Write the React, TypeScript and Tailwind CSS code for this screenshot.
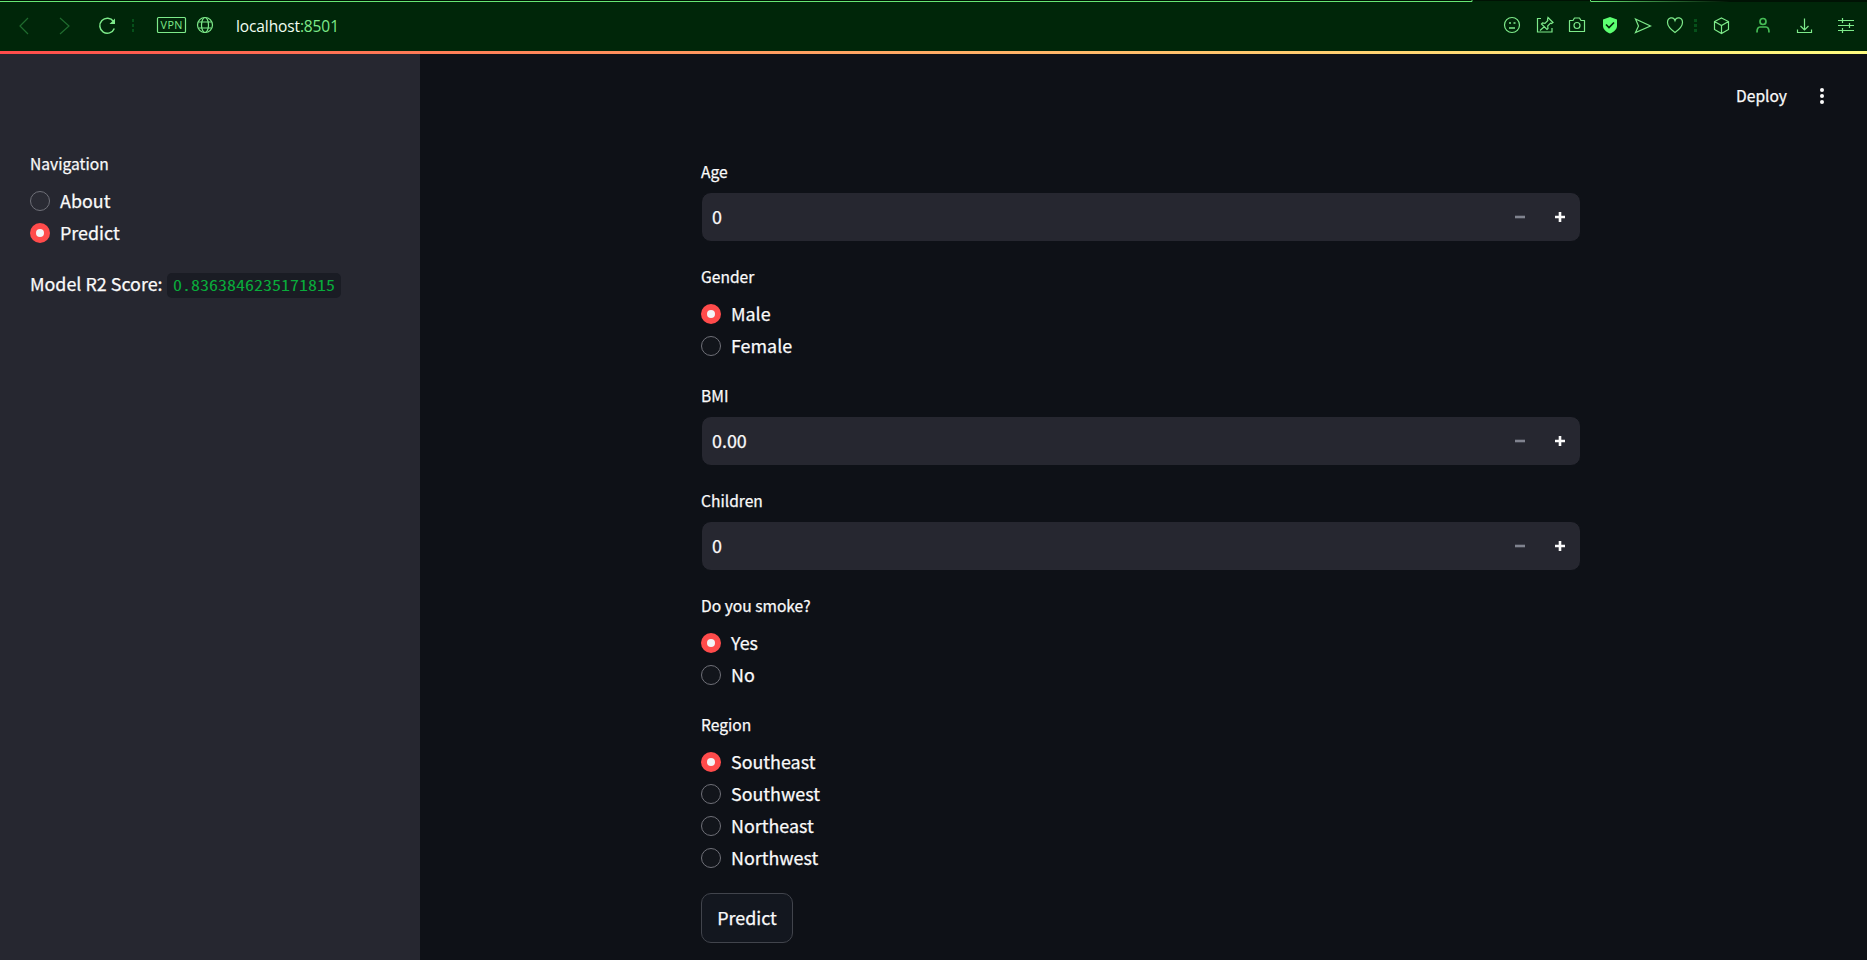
import React from "react";

const SANS = "font-['Noto_Sans_CJK_SC','Noto_Sans',sans-serif]";

function Radio({ label, checked = false }: { label: string; checked?: boolean }) {
  return (
    <div className="flex h-8 items-start gap-[10px] pt-[7px]">
      {checked ? (
        <span className="flex size-5 shrink-0 items-center justify-center rounded-full bg-[#ff4b4b]">
          <span className="size-2 rounded-full bg-[#f4f4f6]" />
        </span>
      ) : (
        <span className="size-5 shrink-0 rounded-full border border-[#6f7078] bg-white/2" />
      )}
      <span className="-mt-px whitespace-nowrap text-[17.9px] leading-5">{label}</span>
    </div>
  );
}

function Label({ children }: { children: React.ReactNode }) {
  return <div className="mb-[5px] h-[30px] whitespace-nowrap text-[15.6px] leading-[28px]">{children}</div>;
}

function RadioGroup({ label, options, value }: { label: string; options: string[]; value: string }) {
  return (
    <div>
      <Label>{label}</Label>
      {options.map((o) => (
        <Radio key={o} label={o} checked={o === value} />
      ))}
    </div>
  );
}

function NumberInput({ label, value }: { label: string; value: string }) {
  return (
    <div>
      <Label>{label}</Label>
      <div className="flex h-[50px] items-center rounded-[10px] border border-[#0e1117] bg-[#262730] pl-[10px]">
        <span className="grow pb-[2px] text-[17.9px] leading-8">{value}</span>
        <svg width="40" height="48" viewBox="0 0 40 48">
          <path d="M15 22.700h10v2.600h-10z" fill="#80838f" />
        </svg>
        <svg width="40" height="48" viewBox="0 0 40 48">
          <path d="M15 22.700h10v2.600h-10zM18.700 19h2.600v10h-2.600z" fill="#fafafa" />
        </svg>
      </div>
    </div>
  );
}

function Toolbar() {
  return (
    <div className="h-[51px] bg-[#002609]">
      <svg width="1867" height="51" viewBox="0 0 1867 51" fill="none" stroke="#7dea8a" strokeWidth="1.2">
        <defs>
          <linearGradient id="tabfade" x1="1590" x2="1730" y1="0" y2="0" gradientUnits="userSpaceOnUse">
            <stop offset="0" stopColor="#66e874" />
            <stop offset="1" stopColor="#001204" />
          </linearGradient>
        </defs>
        <path d="M0 .5H1867" stroke="#001204" strokeWidth="1" />
        <path d="M0 1.500H1472v-1.500M1590.500 0v1.500" stroke="#66e874" strokeWidth="1" />
        <path d="M1591 1h276v1h-276z" fill="url(#tabfade)" stroke="none" />
        <path d="M28 18l-8 8 8 8M60 18l9 8-9 8" stroke="#1f6b2e" />
        <path d="M113.500 21.500A7.500 7.500 0 1 0 114.300 28.500" strokeWidth="1.500" />
        <path d="M115 18.500v5.500h-5.500z" fill="#7dea8a" stroke="none" />
        <path d="M132 19h2v3h-2zM132 24h2v3h-2zM132 29h2v3h-2z" fill="#06501a" stroke="none" />
        <rect x="157.500" y="17.500" width="28" height="15" rx="1" />
        <text x="171.500" y="29.200" fill="#7dea8a" stroke="none" fontSize="10.800" textAnchor="middle" textLength="22" className="font-['Open_Sans',sans-serif]">VPN</text>
        <g>
          <circle cx="205" cy="25" r="7.500" />
          <ellipse cx="205" cy="25" rx="3.500" ry="7.500" />
          <path d="M198.500 22h13M198.500 28h13" />
        </g>
        <text x="236" y="32" fill="#f2fff3" stroke="none" fontSize="15.500" textLength="103" className="font-['Open_Sans',sans-serif]">localhost<tspan fill="#7dea8a">:8501</tspan></text>
        <g>
          <circle cx="1512" cy="25" r="7.500" />
          <path d="M1509 23h2M1513.500 23h2M1509 28h6" strokeWidth="1.400" />
        </g>
        <g>
          <path d="M1541 18.500h-3.500v13.500h14.500v-4" />
          <path d="M1548 17.500l5 5-1.500 1-1-.3-2.800 2.800.3 2.500-1 1-5.500-5.500 1-1 2.500.3 2.800-2.800-.3-1zM1544.500 26.500l-4.500 4" />
        </g>
        <g>
          <path d="M1569.500 20.500h3.500l1.500-2.500h5l1.500 2.500h3.500v11h-15z" strokeLinejoin="round" />
          <circle cx="1577" cy="25.500" r="3" />
        </g>
        <path d="M1610 17l7 2.500v6.500c0 3.500-3.500 6-7 7.500-3.500-1.500-7-4-7-7.500v-6.500z" fill="#5cff72" stroke="none" />
        <path d="M1606 24.500l3 3 5-5" stroke="#002609" strokeWidth="1.700" />
        <path d="M1635.500 19l15 7-15 6.500 3-6.500z" />
        <path d="M1675 32.500c-3.500-2.500-7.500-5.500-7.500-10 0-5 6-6.500 7.500-2 1.500-4.500 7.500-3 7.500 2 0 4.500-4 7.500-7.500 10z" />
        <path d="M1694 19h3v3h-3zM1694 24h3v3h-3zM1694 29h3v3h-3z" fill="#06501a" stroke="none" />
        <path d="M1721.500 18l7 3.500v8l-7 4-7-4v-8zM1714.500 21.500l7 4 7-4M1721.500 25.500v8" />
        <g stroke="#45bd56" strokeWidth="1.700">
          <circle cx="1763" cy="21.500" r="3" />
          <path d="M1757 32.500c0-3 .5-5.500 3-5.500h6c2.500 0 3 2.500 3 5.500" />
        </g>
        <path d="M1804.500 18.500v11M1800.500 26l4 4 4-4M1797.500 29.500v3h14v-3" />
        <path d="M1838 20.500h16M1838 25.500h16M1838 30.500h16M1842.500 18v5M1849.500 23v5M1842.500 28v5" />
      </svg>
    </div>
  );
}

export default function App() {
  return (
    <div className={`flex h-[960px] w-[1867px] flex-col overflow-hidden bg-[#0e1117] font-normal text-[#fafafa] ${SANS}`}>
      <Toolbar />
      <div className="h-[3px] bg-linear-to-r from-[#ff4b4b] to-[#fffd80]" />
      <div className="flex grow [-webkit-text-stroke:0.25px]">
        <aside className="flex w-[420px] flex-col gap-5 bg-[#262730] pt-[95px] pl-[30px]">
          <RadioGroup label="Navigation" options={["About", "Predict"]} value="Predict" />
          <div className="flex h-8 items-center">
            <span className="w-[137px] whitespace-nowrap pb-[2px] text-[17.9px] leading-8">Model R2 Score:</span>
            <code className="mt-[3px] h-[25px] w-[174px] rounded-[5px] bg-[#1a1c24] pl-[6px] font-['Noto_Sans_Mono_CJK_SC','Liberation_Mono',monospace] text-[#09ab3b] [-webkit-text-stroke:0px]">
              <span className="block origin-center scale-y-[0.82] text-[18px] leading-[22px]">0.8363846235171815</span>
            </code>
          </div>
        </aside>
        <main className="flex grow flex-col">
          <header className="flex h-[75px] items-center justify-end gap-[33px] pt-[9px] pr-[43px]">
            <span className="pb-[2px] text-[15.6px] leading-7">Deploy</span>
            <span className="flex flex-col gap-[2px]">
              <i className="size-1 rounded-full bg-[#fafafa]" />
              <i className="size-1 rounded-full bg-[#fafafa]" />
              <i className="size-1 rounded-full bg-[#fafafa]" />
            </span>
          </header>
          <form className="ml-[281px] flex w-[880px] flex-col gap-5 pt-[28px]">
            <NumberInput label="Age" value="0" />
            <RadioGroup label="Gender" options={["Male", "Female"]} value="Male" />
            <NumberInput label="BMI" value="0.00" />
            <NumberInput label="Children" value="0" />
            <RadioGroup label="Do you smoke?" options={["Yes", "No"]} value="Yes" />
            <RadioGroup label="Region" options={["Southeast", "Southwest", "Northeast", "Northwest"]} value="Southeast" />
            <button type="button" className="h-[50px] w-[92px] rounded-[10px] border border-[#41444c] bg-[#13171f] pb-[2px] text-[17.9px] leading-8">
              Predict
            </button>
          </form>
        </main>
      </div>
    </div>
  );
}
